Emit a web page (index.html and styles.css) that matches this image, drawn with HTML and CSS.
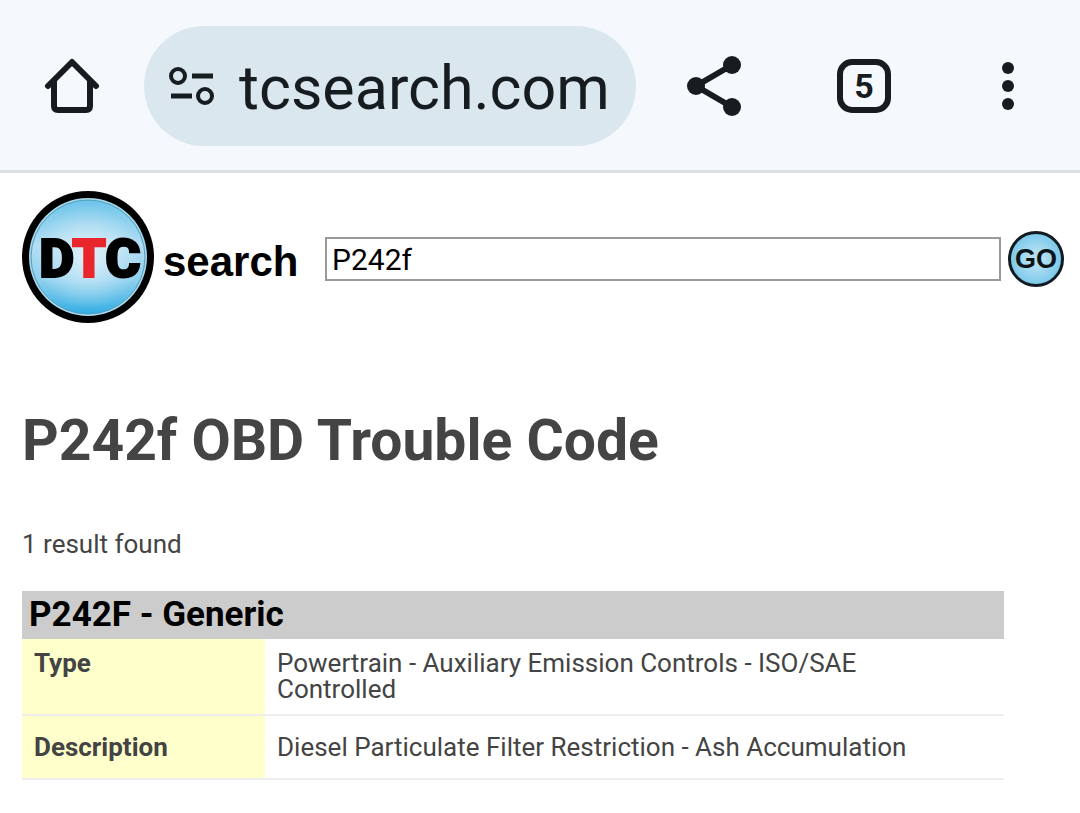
FILE: index.html
```html
<!DOCTYPE html>
<html lang="en">
<head>
    <meta charset="UTF-8">
    <meta name="viewport" content="width=device-width, initial-scale=1.0">
    <title>P242f OBD Trouble Code - DTC Search</title>
    <link rel="stylesheet" href="styles.css">
</head>
<body>
    <div class="toolbar">
        <button type="button" class="icon-button" aria-label="Home">
            <svg width="56" height="56" viewBox="0 0 56 56" fill="none" stroke="currentColor" stroke-width="6" stroke-linecap="round" stroke-linejoin="round">
                <path d="M4 28 L28 4 L52 28"/>
                <path d="M10 21 V48 Q10 52 14 52 H42 Q46 52 46 48 V21" stroke-linecap="butt"/>
            </svg>
        </button>
        <div class="address-bar">
            <button type="button" class="site-info" aria-label="Site information">
                <svg width="46" height="38" viewBox="0 0 46 38" fill="none" stroke="currentColor" stroke-width="4">
                    <circle cx="9" cy="9" r="7"/>
                    <path d="M23 9 H44 M2 29 H23" stroke-width="5"/>
                    <circle cx="36" cy="29" r="7"/>
                </svg>
            </button>
            <input type="text" class="address" value="tcsearch.com" aria-label="Address">
        </div>
        <div class="toolbar-actions">
            <button type="button" class="icon-button" aria-label="Share">
                <svg width="68" height="60" viewBox="0 0 68 60">
                    <path d="M46 9 L10 30 L46 51" fill="none" stroke="currentColor" stroke-width="6"/>
                    <g fill="currentColor">
                        <circle cx="46" cy="9" r="9"/>
                        <circle cx="10" cy="30" r="9"/>
                        <circle cx="46" cy="51" r="9"/>
                    </g>
                </svg>
            </button>
            <button type="button" class="icon-button" aria-label="Tabs">
                <span class="tab-count">5</span>
            </button>
            <button type="button" class="icon-button" aria-label="Menu">
                <svg width="12" height="48" viewBox="0 0 12 48" fill="currentColor">
                    <circle cx="6" cy="6" r="6"/>
                    <circle cx="6" cy="24" r="6"/>
                    <circle cx="6" cy="42" r="6"/>
                </svg>
            </button>
        </div>
    </div>

    <div class="page">
        <header class="site-header">
            <a href="/" class="logo" aria-label="DTC search">
                <svg width="278" height="138" viewBox="0 0 278 138">
                    <defs>
                        <linearGradient id="logo-blue" x1="0" y1="0" x2="0" y2="1">
                            <stop offset="0" stop-color="#6cc4ea"/>
                            <stop offset="0.4" stop-color="#b4def2"/>
                            <stop offset="0.7" stop-color="#8fd0ef"/>
                            <stop offset="1" stop-color="#35aee3"/>
                        </linearGradient>
                        <radialGradient id="logo-glow" cx="50%" cy="50%" r="50%">
                            <stop offset="0" stop-color="#eef7fb" stop-opacity="0.8"/>
                            <stop offset="1" stop-color="#eef7fb" stop-opacity="0"/>
                        </radialGradient>
                    </defs>
                    <circle cx="66" cy="67" r="66" fill="#000"/>
                    <circle cx="66" cy="67" r="59" fill="#a9d6e8"/>
                    <circle cx="66" cy="67" r="57" fill="url(#logo-blue)" stroke="#4d9fc0" stroke-width="1"/>
                    <circle cx="66" cy="67" r="52" fill="url(#logo-glow)"/>
                    <text x="68" y="87" text-anchor="middle" class="logo-letters">D<tspan class="letter-t">T</tspan>C</text>
                    <text x="141" y="86" class="logo-word">search</text>
                </svg>
            </a>
            <form class="search-form" action="/search">
                <input type="text" name="q" class="search-input" value="P242f" aria-label="Trouble code">
                <button type="submit" class="go-button" aria-label="Go">GO</button>
            </form>
        </header>

        <main>
            <h1>P242f OBD Trouble Code</h1>
            <p class="result-count">1 result found</p>
            <table class="results">
                <colgroup>
                    <col class="label-column">
                    <col>
                </colgroup>
                <thead>
                    <tr>
                        <th colspan="2" class="code-name">P242F - Generic</th>
                    </tr>
                </thead>
                <tbody>
                    <tr>
                        <th scope="row">Type</th>
                        <td>Powertrain - Auxiliary Emission Controls - ISO/SAE Controlled</td>
                    </tr>
                    <tr class="description">
                        <th scope="row">Description</th>
                        <td>Diesel Particulate Filter Restriction - Ash Accumulation</td>
                    </tr>
                </tbody>
            </table>
        </main>
    </div>
</body>
</html>
```

FILE: styles.css
```css
:root {
    --ink: #171c20;
    --text: #444;
    --toolbar: #f5f9fe;
    --address: #dae7ef;
}

* {
    margin: 0;
    padding: 0;
    box-sizing: border-box;
}

body {
    font-family: Roboto, sans-serif;
    background: #fff;
    color: var(--text);
}

button {
    border: none;
    background: none;
    color: inherit;
    font: inherit;
    cursor: pointer;
}

svg {
    display: block;
}

/* Browser toolbar */
.toolbar {
    display: flex;
    align-items: center;
    padding: 26px 0 24px;
    background: var(--toolbar);
    border-bottom: 3px solid #dce1e4;
    color: var(--ink);
}

.icon-button {
    display: flex;
    flex: 0 0 144px;
    align-items: center;
    justify-content: center;
    height: 120px;
}

.address-bar {
    display: flex;
    flex: 1;
    align-items: center;
    gap: 24px;
    min-width: 0;
    height: 120px;
    padding: 0 20px 0 25px;
    border-radius: 60px;
    background: var(--address);
}

.address {
    flex: 1;
    min-width: 0;
    height: 80px;
    padding-top: 4px;
    border: none;
    outline: none;
    background: none;
    color: inherit;
    font-family: inherit;
    font-size: 61px;
}

.toolbar-actions {
    display: flex;
    padding-left: 12px;
}

.tab-count {
    display: flex;
    align-items: center;
    justify-content: center;
    width: 54px;
    height: 54px;
    border: 6px solid;
    border-radius: 15px;
    font-size: 34px;
    font-weight: 700;
}

/* Page header */
.page {
    padding: 17px 16px 32px 22px;
}

.site-header {
    display: flex;
    align-items: center;
    gap: 25px;
}

.logo-letters {
    fill: #000;
    stroke: #000;
    stroke-width: 2px;
    font-family: Roboto, sans-serif;
    font-size: 54px;
    font-weight: 900;
}

.letter-t {
    fill: #e8262c;
    stroke: #e8262c;
}

.logo-word {
    font-family: "Liberation Sans", Arial, sans-serif;
    font-size: 42px;
    font-weight: 700;
}

.search-form {
    display: flex;
    flex: 1;
    align-items: center;
    gap: 7px;
    min-width: 0;
}

.search-input {
    flex: 1;
    min-width: 0;
    height: 44px;
    padding: 0 5px;
    border: 2px solid #999;
    background: #fff;
    color: #000;
    font-family: inherit;
    font-size: 30px;
}

.go-button {
    width: 56px;
    height: 56px;
    border: 3px solid #101a20;
    border-radius: 50%;
    background: radial-gradient(circle, #b5e0f3 20%, #5dbce5 100%);
    color: #0c1418;
    font-family: "Liberation Sans", Arial, sans-serif;
    font-size: 27px;
    font-weight: 700;
}

/* Results */
h1 {
    margin-top: 79px;
    font-size: 57px;
    line-height: 68px;
}

.result-count {
    margin-top: 53px;
    font-size: 26px;
    line-height: 32px;
}

.results {
    width: calc(100% - 60px);
    margin-top: 31px;
    border-collapse: collapse;
    table-layout: fixed;
    font-size: 26px;
    line-height: 26px;
    text-align: left;
}

.label-column {
    width: 243px;
}

.results th,
.results td {
    padding: 11px 12px 12px;
    border-bottom: 2px solid #eee;
    vertical-align: top;
}

.results td {
    padding-right: 24px;
}

.results th {
    background: #ffffcc;
}

.results .description th,
.results .description td {
    padding-top: 18px;
    padding-bottom: 18px;
}

.results .code-name {
    padding: 4px 7px;
    border: none;
    background: #ccc;
    color: #000;
    font-size: 35px;
    line-height: 40px;
}
```
